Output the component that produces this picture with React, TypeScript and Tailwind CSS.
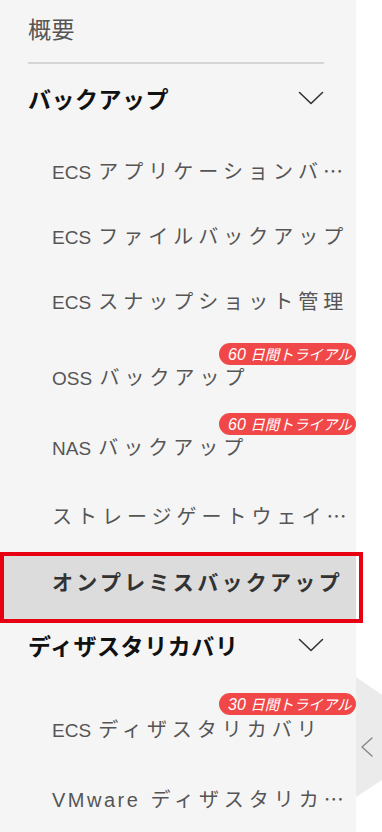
import React from "react";

const LAT = "font-['Liberation_Sans','Noto_Sans_CJK_JP',sans-serif]";
const JP = "font-['Noto_Sans_CJK_JP',sans-serif]";

function Chevron() {
  return (
    <svg width="26" height="14" viewBox="0 0 26 14" fill="none">
      <polyline points="1.5,1.5 13,12.5 24.5,1.5" stroke="#333" strokeWidth="1.6" strokeLinecap="round" strokeLinejoin="round" />
    </svg>
  );
}

function Badge({ n, top }: { n: string; top: string }) {
  return (
    <div className={`absolute right-0 ${top} h-[22px] w-[137px] rounded-full bg-[#f04848] flex items-center pl-[9px] text-white italic leading-none`}>
      <span className="whitespace-nowrap">
        <span className={`${LAT} text-[16px]`}>{n} </span>
        <span className={`${JP} text-[14.5px]`}>日間トライアル</span>
      </span>
    </div>
  );
}

function Label({ latin, jp, ell, latinCls = "text-[19px]" }: { latin?: string; jp: string; ell?: boolean; latinCls?: string }) {
  return (
    <span className="whitespace-nowrap leading-none">
      {latin && <span className={`${LAT} ${latinCls} mr-[2px]`}>{latin}</span>}
      <span className={`${JP} text-[20px] tracking-[5px]`}>{jp}</span>
      {ell && <span className={`${JP} text-[20px]`}>…</span>}
    </span>
  );
}

export default function App() {
  const sub = "relative flex items-center pl-[52px] text-[#555]";
  return (
    <div className="relative w-[382px] h-[832px] bg-white overflow-hidden flex">
      <div className="w-[356px] h-full bg-[#f5f5f5] flex flex-col shrink-0">
        <div className={`h-[62px] flex items-center pl-[28px] pb-[5px] text-[23px] leading-none tracking-[0.5px] text-[#555] ${JP}`}>概要</div>
        <div className="ml-[28px] w-[296px] h-[2px] bg-[#d6d6d6]" />
        <div className="h-[71px] flex items-center justify-between pl-[28px] pr-[32px] pb-[3px]">
          <span className={`${JP} text-[23px] font-bold leading-none tracking-[0.5px] text-[#111]`}>バックアップ</span>
          <Chevron />
        </div>
        <div className={`${sub} h-[69px] pt-[3px]`}>
          <Label latin="ECS " jp="アプリケーションバ" ell />
        </div>
        <div className={`${sub} h-[65px]`}>
          <Label latin="ECS " jp="ファイルバックアップ" />
        </div>
        <div className={`${sub} h-[70px] pb-[5px]`}>
          <Label latin="ECS " jp="スナップショット管理" />
        </div>
        <div className={`${sub} h-[73px] pt-[4px]`}>
          <Badge n="60" top="top-[4px]" />
          <Label latin="OSS " jp="バックアップ" />
        </div>
        <div className={`${sub} h-[70px] pt-[1px]`}>
          <Badge n="60" top="top-[1px]" />
          <Label latin="NAS " jp="バックアップ" />
        </div>
        <div className={`${sub} h-[70px] pb-[2px]`}>
          <Label jp="ストレージゲートウェイ" ell />
        </div>
        <div className="h-[71px] flex items-center pl-[52px] pb-[13px] bg-[#dcdcdc]">
          <span className={`${JP} text-[21px] font-bold leading-none tracking-[3.3px] text-[#333] whitespace-nowrap`}>オンプレミスバックアップ</span>
        </div>
        <div className="h-[64px] flex items-center justify-between pl-[28px] pr-[32px] pb-[20px]">
          <span className={`${JP} text-[23px] font-bold leading-none tracking-[0.6px] text-[#111]`}>ディザスタリカバリ</span>
          <Chevron />
        </div>
        <div className={`${sub} h-[77px] pt-[7px]`}>
          <Badge n="30" top="top-[6px]" />
          <Label latin="ECS " jp="ディザスタリカバリ" />
        </div>
        <div className={`${sub} h-[68px] pt-[2px]`}>
          <Label latin="VMware " jp="ディザスタリカ" ell latinCls="text-[20px] tracking-[2.5px]" />
        </div>
      </div>

      <div className="absolute left-[356px] top-[677px] w-[26px] h-[120px]">
        <svg width="26" height="120" viewBox="0 0 26 120">
          <polygon points="0,0 26,18 26,103 0,120" fill="#ebebeb" />
          <polyline points="16,61 6,70 16,79" fill="none" stroke="#8a8a8a" strokeWidth="1.5" strokeLinecap="round" strokeLinejoin="round" />
        </svg>
      </div>

      <div className="absolute left-0 top-[552px] w-[363px] h-[71px] border-[4px] border-[#e60012] pointer-events-none" />
    </div>
  );
}
